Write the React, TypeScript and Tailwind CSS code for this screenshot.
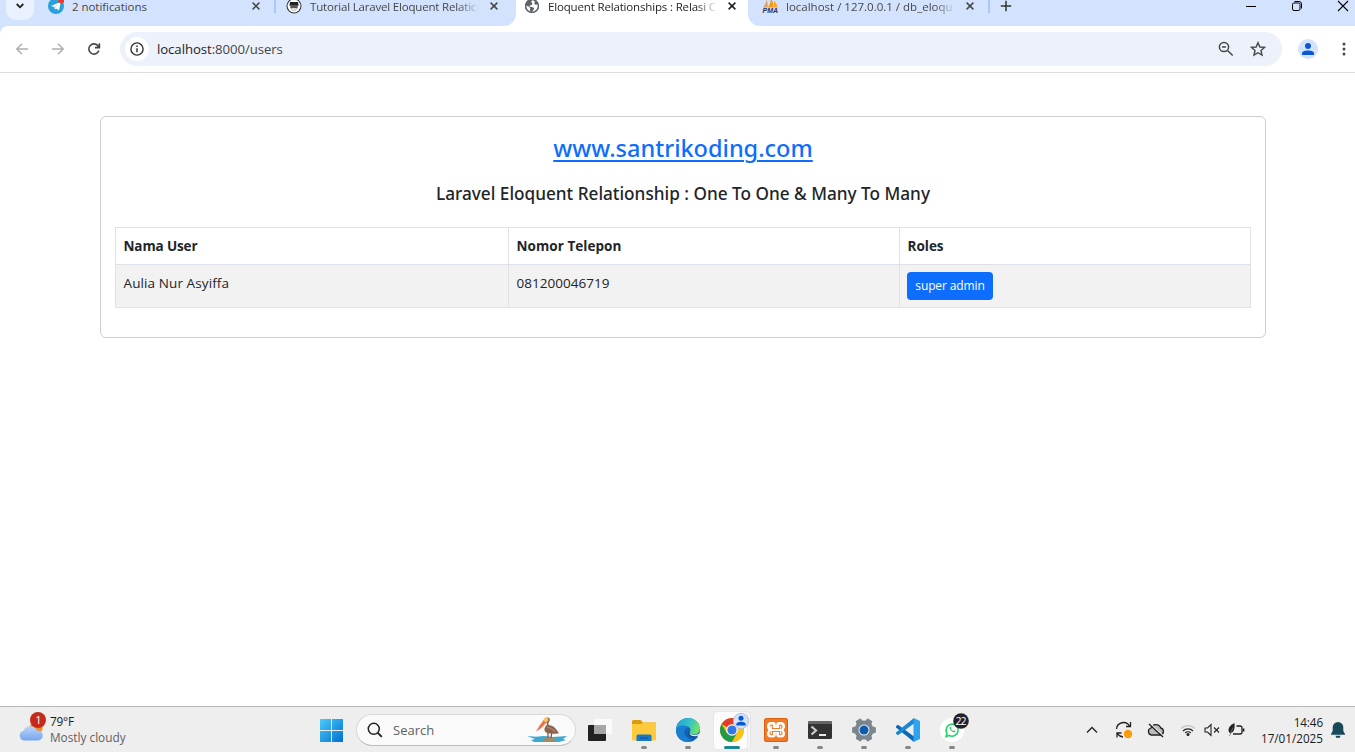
import type { ReactNode } from "react";

type P = { children?: ReactNode };

const S = ({ children }: P) => (
  <svg width={24} height={24} viewBox="0 0 24 24" className="block shrink-0 overflow-visible">
    {children}
  </svg>
);

function Close({ dark }: { dark?: boolean }) {
  return (
    <svg width="8" height="8" viewBox="0 0 8 8" className="block shrink-0">
      <path d="M.6.6l6.8 6.8M7.4.6L.6 7.4" stroke={dark ? "#1f1f1f" : "#474747"} strokeWidth="1.5" />
    </svg>
  );
}

function Telegram() {
  return (
    <svg width="16" height="16" viewBox="0 0 16 16" className="block shrink-0">
      <circle cx="8" cy="8" r="8" fill="#2aa1da" />
      <path d="M3 7.9l8.8-3.6c.5-.2.8.1.7.6l-1.4 6.8c-.1.5-.4.6-.8.3L8.1 10.4l-1.2 1.1-.5-2.5z" fill="#fff" />
      <path d="M6.4 9l4.2-3.2-3.4 3.9-.3 1.8z" fill="#b5d6ea" />
      <circle cx="13.2" cy="2.6" r="3" fill="#f03a2a" />
    </svg>
  );
}

function Santri() {
  return (
    <svg width="16" height="16" viewBox="0 0 16 16" className="block shrink-0">
      <circle cx="8" cy="8" r="7" fill="#fff" stroke="#3c3c3c" strokeWidth="1.1" />
      <path d="M4 4h8l.6 3.800H3.400z" fill="#222" />
      <path d="M4.300 8h7.400v1.400c0 1-1 1.300-1.700.8H6c-.7.5-1.700.2-1.700-.8z" fill="#555" />
      <path d="M5.500 11q2.500 1.600 5 0v1.200q-2.500 1.300-5 0z" fill="#bbb" />
    </svg>
  );
}

function Globe() {
  return (
    <svg width="16" height="16" viewBox="0 0 16 16" className="block shrink-0">
      <circle cx="8" cy="8" r="7" fill="#5f6368" />
      <path d="M9.500 1.500C8 2 7 3 7.500 4.200S9 5.500 8.200 6.500 5.800 6.800 5.500 8 7 9 8.500 9.200s2 1.400 1.300 2.300-1.300 1.300-1.600 2.600c3.500 0 6-2.600 6-6 0-.7-.1-1.400-.4-2-.8.3-1 .9-2 .6s-1.700-1.200-1.300-2 .1-1.400-.2-2.200z" fill="#fff" />
      <path d="M2 7.600l3 1.200 1.200 1.500-.2 2.200.8 1.500C4 13.500 1.700 11 2 7.600z" fill="#fff" />
      <circle cx="8" cy="8" r="6.400" fill="none" stroke="#5f6368" strokeWidth="1.400" />
    </svg>
  );
}

function Pma() {
  return (
    <svg width="17" height="16" viewBox="0 0 17 16" className="block shrink-0">
      <path d="M1 9.500Q4 6 4.800 1.500 6 6 5.500 9.500z" fill="#d9a066" />
      <path d="M5.800 9.500Q9 5 8.800.5q3 4 2.400 9z" fill="#f89c0e" />
      <path d="M11.500 9.500q.8-4 .3-7 3 3 4 7z" fill="#f8a530" />
      <text x="0.500" y="14.800" fontFamily="Liberation Sans, sans-serif" fontWeight="700" fontStyle="italic" fontSize="6.600" fill="#2f2f5c" textLength="15.500" lengthAdjust="spacingAndGlyphs">PMA</text>
    </svg>
  );
}

const tab = "whitespace-nowrap text-[11.5px] font-['Open_Sans',sans-serif]";
const fade = "w-[168px] overflow-hidden whitespace-nowrap leading-[14px] [mask-image:linear-gradient(to_right,#000_148px,transparent_170px)]";

function Tabs() {
  return (
    <div className="flex h-[26px] shrink-0 bg-white">
      <div className="flex w-[516px] shrink-0 rounded-br-[12px] bg-[#d3e3fd]">
        <div className="ml-[6px] flex h-[20px] w-[28px] items-center justify-center rounded-b-[10px] bg-[#e9f1fe] pb-[8px]">
          <svg width="8" height="6" viewBox="0 0 8 6"><path d="M.7 1L4 4.300 7.300 1" fill="none" stroke="#1f1f1f" strokeWidth="1.800" /></svg>
        </div>
        <div className="ml-[14px] flex h-[12px] w-[227px] items-center">
          <Telegram />
          <div className="ml-[8px] w-[180px] leading-[14px]"><span className={tab + " tracking-[-0.05px] text-[#474747]"}>2 notifications</span></div>
          <Close />
        </div>
        <div className="-ml-px h-[13px] w-[2px] bg-[#a8c7fa]" />
        <div className="ml-[10px] flex h-[12px] items-center">
          <Santri />
          <div className={fade + " ml-[8px]"}>
            <span className={tab + " tracking-[-0.18px] text-[#474747]"}>Tutorial Laravel Eloquent Relatic</span>
          </div>
          <div className="ml-[12px]"><Close /></div>
        </div>
      </div>
      <div className="flex h-[12px] w-[232px] shrink-0 items-center pl-[8px]">
        <Globe />
        <div className={fade + " ml-[8px]"}>
          <span className={tab + " tracking-[-0.16px] text-[#1f1f1f]"}>Eloquent Relationships : Relasi C</span>
        </div>
        <div className="ml-[12px]"><Close dark /></div>
      </div>
      <div className="flex flex-1 rounded-bl-[12px] bg-[#d3e3fd]">
        <div className="flex h-[12px] items-center pl-[14px]">
          <Pma />
          <div className={fade + " ml-[7px]"}>
            <span className={tab + " text-[#474747]"}>localhost / 127.0.0.1 / db_eloqu</span>
          </div>
          <div className="ml-[12px]"><Close /></div>
          <div className="mt-px ml-[14px] h-[13px] w-[2px] bg-[#a8c7fa]" />
          <svg width="12" height="12" viewBox="0 0 12 12" className="ml-[10px] block"><path d="M6 .8v10.400M.8 6h10.400" stroke="#333" strokeWidth="1.500" /></svg>
        </div>
        <div className="ml-auto flex h-[12px] items-center pr-[6px]">
          <svg width="10" height="12" viewBox="0 0 10 12" className="block"><path d="M0 6.500h10" stroke="#000" /></svg>
          <svg width="10" height="10" viewBox="0 0 10 10" className="ml-[36px] block"><rect x=".5" y="2" width="7.500" height="7.500" rx="1.500" fill="none" stroke="#000" /><path d="M2.500.5H7q2.500 0 2.500 2.500v4.500" fill="none" stroke="#000" /></svg>
          <svg width="12" height="12" viewBox="0 0 12 12" className="ml-[35px] block"><path d="M1 1l10 10M11 1L1 11" stroke="#000" strokeWidth="1.100" /></svg>
        </div>
      </div>
    </div>
  );
}

function Toolbar() {
  return (
    <div className="shrink-0 bg-[#d3e3fd]">
      <div className="flex h-[47px] items-center rounded-tl-[8px] border-b border-[#dfdfdf] bg-white pl-[16px]">
        <svg width="12" height="12" viewBox="0 0 12 12"><path d="M12 6H1M6 .8L.9 6 6 11.200" fill="none" stroke="#b0b0b0" strokeWidth="1.500" /></svg>
        <svg width="12" height="12" viewBox="0 0 12 12" className="ml-[24px]"><path d="M0 6h11M6 .8L11.100 6 6 11.200" fill="none" stroke="#b0b0b0" strokeWidth="1.500" /></svg>
        <svg width="12" height="12" viewBox="0 0 12 12" className="ml-[24px] overflow-visible"><path d="M10.800 7.400A5.100 5.100 0 1 1 10.200 3.200L11.400 4.500M11.400.2v4.400H7" fill="none" stroke="#444" strokeWidth="1.600" /></svg>
        <div className="ml-[20px] flex h-[34px] w-[1162px] items-center rounded-full bg-[#ecf1fa] pl-[5px]">
          <div className="flex size-[24px] items-center justify-center rounded-full bg-white">
            <svg width="14" height="14" viewBox="0 0 14 14"><circle cx="7" cy="7" r="6.100" fill="none" stroke="#333" strokeWidth="1.400" /><path d="M7 6.200v4M7 3.600v1.500" stroke="#333" strokeWidth="1.500" /></svg>
          </div>
          <div className="ml-[8px] pb-px text-[13.2px] leading-[20px] tracking-[-0.07px] text-[#474747] font-['Open_Sans',sans-serif]">
            <span className="text-[#1f1f1f]">localhost</span>:8000/users
          </div>
          <svg width="16" height="16" viewBox="0 0 16 16" className="ml-auto"><circle cx="6" cy="6" r="4.600" fill="none" stroke="#474747" strokeWidth="1.500" /><path d="M9.500 9.500l5.200 5M4 6h4" stroke="#474747" strokeWidth="1.500" /></svg>
          <svg width="16" height="16" viewBox="0 0 16 16" className="mr-[16px] ml-[16px]"><path d="M8 1.700l1.900 4.300 4.600.4-3.500 3.100 1 4.600L8 11.700l-4 2.400 1-4.600L1.500 6.400l4.600-.4z" fill="none" stroke="#474747" strokeWidth="1.400" /></svg>
        </div>
        <svg width="20" height="20" viewBox="0 0 20 20" className="ml-[16px]"><circle cx="10" cy="10" r="10" fill="#d3e3fd" /><circle cx="10" cy="7" r="3" fill="#0b57d0" /><path d="M4 16v-1.600C4 12.200 7 11.400 10 11.400s6 .8 6 3V16z" fill="#0b57d0" /></svg>
        <svg width="4" height="16" viewBox="0 0 4 16" className="ml-[24px]"><circle cx="2" cy="3" r="1.500" fill="#474747" /><circle cx="2" cy="8" r="1.500" fill="#474747" /><circle cx="2" cy="13" r="1.500" fill="#474747" /></svg>
      </div>
    </div>
  );
}

const th = "h-[37px] border-r border-b border-[#dee2e6] pt-[8px] pl-[7.5px] text-[13.5px] leading-[21px] font-bold ";
const td = "h-[43px] border-r border-b border-[#dee2e6] bg-[#f2f2f2] pt-[8px] pl-[7.5px] text-[13.5px] leading-[21px] ";

function Page() {
  return (
    <main className="flex-1 overflow-hidden pt-[43px] text-[#212529] font-['Open_Sans',sans-serif]">
      <div className="ml-[100px] h-[222px] w-[1166px] rounded-[6px] border border-[#cfcfcf] px-[14px] pt-[15px]">
        <h4 className="h-[34px] text-center text-[23.5px] leading-[33px] font-medium text-[#0d6efd] underline decoration-2 underline-offset-[3px] font-['Noto_Sans',sans-serif]">www.santrikoding.com</h4>
        <h5 className="mt-[16px] h-[24px] text-center text-[17.2px] leading-[24px] font-medium font-['Noto_Sans',sans-serif]">Laravel Eloquent Relationship : One To One &amp; Many To Many</h5>
        <div className="mt-[21px] grid w-[1136px] grid-cols-[393px_391px_1fr] border-t border-l border-[#dee2e6]">
          <div className={th + "tracking-[-0.12px]"}>Nama User</div>
          <div className={th + "tracking-[0.05px]"}>Nomor Telepon</div>
          <div className={th}>Roles</div>
          <div className={td + "tracking-[0.1px]"}>Aulia Nur Asyiffa</div>
          <div className={td + "tracking-[0.03px]"}>081200046719</div>
          <div className="h-[43px] border-r border-b border-[#dee2e6] bg-[#f2f2f2] pt-[7px] pl-[7px]">
            <div className="flex h-[28px] w-[86px] items-center justify-center rounded-[4px] bg-[#0d6efd] text-[12px] tracking-[-0.12px] text-white">super admin</div>
          </div>
        </div>
      </div>
    </main>
  );
}

function TaskItem({ children, on = true }: P & { on?: boolean }) {
  return (
    <div className="flex h-full w-[44px] flex-col items-center pt-[11px]">
      {children}
      {on && <div className="mt-[4px] h-[3px] w-[6px] rounded-full bg-[#868686]" />}
    </div>
  );
}

function Taskbar() {
  return (
    <footer className="flex h-[46px] shrink-0 border-t border-[#b9bbba] bg-[#eeeeee] font-['Open_Sans',sans-serif]">
      <div className="flex w-[309px] pt-[5px] pl-[18px]">
        <svg width="30" height="32" viewBox="0 0 30 32" className="shrink-0">
          <defs><linearGradient id="cl" x1="0" y1="0" x2="0" y2="1"><stop offset="0" stopColor="#bcd6fb" /><stop offset="1" stopColor="#76a5ee" /></linearGradient></defs>
          <circle cx="18" cy="16" r="6.500" fill="#f58a1f" />
          <path d="M6 28.500a5 5 0 0 1-.5-9.800A7.500 7.500 0 0 1 19 18.500a5 5 0 0 1 1.500 10z" fill="url(#cl)" />
          <circle cx="20" cy="8" r="8" fill="#c42b1c" />
          <text x="20.500" y="12" textAnchor="middle" fontFamily="Open Sans, sans-serif" fontSize="11" fill="#fff">1</text>
        </svg>
        <div className="ml-[2px] flex flex-col pt-[1px] text-[11.8px] leading-[16px]">
          <span className="tracking-[-0.2px] text-[#1b1b1b]">79°F</span>
          <span className="text-[#5f5f5f]">Mostly cloudy</span>
        </div>
      </div>
      <TaskItem on={false}>
        <S><defs><linearGradient id="wn" x1="0" y1="0" x2="1" y2="1"><stop offset="0" stopColor="#4cc9fb" /><stop offset="1" stopColor="#0070cf" /></linearGradient></defs><path d="M1 1h11v11H1zM13 1h11v11H13zM1 13h11v11H1zM13 13h11v11H13z" fill="url(#wn)" /></S>
      </TaskItem>
      <div className="mt-[7px] ml-[3px] flex h-[32px] w-[220px] items-center rounded-full border border-[#d9d9d9] border-b-[#bcbcbc] bg-[#fafafa] pr-[7px] pl-[10px]">
        <svg width="16" height="16" viewBox="0 0 16 16"><circle cx="6.800" cy="6.800" r="5.500" fill="none" stroke="#222" strokeWidth="1.500" /><path d="M10.800 10.800l4 4" stroke="#222" strokeWidth="1.900" /></svg>
        <div className="ml-[10px] text-[13px] leading-[20px] text-[#616161]">Search</div>
        <svg width="41" height="26" viewBox="0 0 41 26" className="ml-auto">
          <path d="M0 19l9 .8 8-.8 9 1 14-1-4 3 3 1-7 2H7l-3-2 4-1z" fill="#3da9cf" />
          <path d="M15 25q2-5 7-5t8 5z" fill="#a08a68" />
          <path d="M21 14v7M25 14l-1 7" stroke="#7a5230" strokeWidth="1.200" />
          <path d="M19 .8c3-1 4.500 1 3.500 3.200s-2 3 0 4.200c4 .3 7 4 9.500 8-5 .8-9 .8-12.500-.5-3.500-2.500-2-5.200.2-7.700 1-1.500-1-3-1.700-5z" fill="#8b6450" />
          <path d="M20 10q5 1 8 4.500" fill="none" stroke="#b38a6c" strokeWidth="1.200" />
          <path d="M17 2.500Q12.500 8 9 14.500q6-3 11-10z" fill="#f0714a" />
          <circle cx="19" cy="2.800" r="2.300" fill="#f7c463" />
        </svg>
      </div>
      <div className="ml-[2px] flex">
        <TaskItem on={false}>
          <S><rect y="7" width="18" height="16" rx="1" fill="#222" /><rect x="6" y="1" width="18" height="15" rx="1" fill="#fafafa" /><rect x="6" y="7" width="12" height="9" fill="#a6a6a6" /></S>
        </TaskItem>
        <TaskItem>
          <S><path d="M0 3.500Q0 2 1.500 2h7l2.500 2.500H24V20H0z" fill="#d99b0b" /><path d="M0 6h9l2-1.500h13V22.500H0z" fill="#fdca3c" /><path d="M4.500 23v-5q0-1.500 1.500-1.500h12q1.500 0 1.500 1.500v5z" fill="#1878c8" /><path d="M8 20h8" stroke="#0f5da3" strokeWidth="1.500" /></S>
        </TaskItem>
        <TaskItem>
          <S>
            <defs><linearGradient id="e1" x1="0" y1="0" x2="1" y2=".3"><stop offset="0" stopColor="#1c9fdc" /><stop offset=".6" stopColor="#35c1c8" /><stop offset="1" stopColor="#6be26b" /></linearGradient></defs>
            <circle cx="12" cy="12" r="12" fill="#1263b3" />
            <path d="M0 12C0 5 5 0 12 0s12 5 12 10.500c0 4-3 6-6.500 6-3 0-4-1.500-3.500-2.500 1.500-2.500-.5-6-5-6C4 8 .5 10.500 0 12z" fill="url(#e1)" />
            <path d="M0 12C1 9 4 7 8 7.500c2.500.3 4 1.500 4 2.500-3 0-4.500 3-3.500 6s4 5.500 7.500 5.500c-7 5.500-16 0-16-9.500z" fill="#1b7fd0" />
            <path d="M13.500 14.500c0 2 5 3.500 9 1.500l1.500-.5v3l-1 1.500-1.500-1.500c-3 1.500-8 0-8-4z" fill="#eee" />
            <path d="M12.800 13.500c-.5 4 5.200 5.800 9.700 4-1.500 1.800-4.500 2.800-7 2.300s-4.500-3.800-2.700-6.300z" fill="#0f4f9a" />
          </S>
        </TaskItem>
        <div className="relative flex h-full w-[44px] flex-col items-center pt-[11px]">
          <div className="absolute top-[4px] left-[3px] h-[39px] w-[38px] rounded-[4px] border border-[#e4e4e4] bg-[#f6f6f6]" />
          <div className="absolute top-[4px] left-[3px] h-[39px] w-[35px] rounded-[4px] border border-[#e8e8e8] bg-[#fcfcfc]" />
          <div className="relative">
            <S><circle cx="12" cy="12" r="12" fill="#fbc116" /><path d="M12 12L1.600 6a12 12 0 0 1 20.800 0z" fill="#e33b2e" /><path d="M1.600 6A12 12 0 0 0 12 24l5.200-9L12 12 6.800 15z" fill="#229a48" /><path d="M22.400 6H12v6l5.200 3L12 24A12 12 0 0 0 22.400 6z" fill="#fbc116" /><circle cx="12" cy="12" r="5.800" fill="#fff" /><circle cx="12" cy="12" r="4.600" fill="#3377e8" /><circle cx="21" cy="3" r="7.700" fill="#d3e3fd" stroke="#aab6c9" strokeWidth=".8" /><circle cx="21" cy=".3" r="2.500" fill="#0b57d0" /><path d="M16.300 7.500V6.500q0-2.700 4.700-2.700t4.700 2.700v1z" fill="#0b57d0" /></S>
          </div>
          <div className="relative mt-[4px] h-[3px] w-[16px] rounded-full bg-[#1f8494]" />
        </div>
        <TaskItem>
          <S>
            <rect width="24" height="24" rx="2.500" fill="#d9620f" /><rect x="1" y="1" width="22" height="22" rx="2" fill="#f07a26" />
            <path d="M7.500 4h1.800Q11.800 4 11.800 7v1.500h.4V7Q12.200 4 14.700 4h1.800Q21 4 21 8.200 21 10.500 19.500 12 21 13.500 21 15.500 21 19.500 17 19.500h-1.800q-3 0-3-3V15h-.4v1.500q0 3-3 3H7q-4 0-4-4Q3 13.500 4.500 12 3 10.500 3 8.200 3 4 7.500 4z" fill="#fff" />
            <path d="M6 8.500q0-1.500 1.500-1.500h.8v3.500H15.700V7h.8Q18 7 18 8.500q0 1.300-1 2M7 13.500q-1 .6-1 2 0 1.200 1.200 1.200h1.200V13.500H15.600v3.200h1.200q1.200 0 1.200-1.200 0-1.400-1-2" fill="none" stroke="#f07a26" strokeWidth="1.100" />
          </S>
        </TaskItem>
        <TaskItem>
          <S><rect y="3" width="24" height="18" rx="1.500" fill="#333" /><path d="M0 6V4.500Q0 3 1.500 3h21Q24 3 24 4.500V6z" fill="#666" /><path d="M3.500 8.500l4.500 4-4.500 4" fill="none" stroke="#ccc" strokeWidth="2.200" /><path d="M11 17h7" stroke="#fff" strokeWidth="1.800" /></S>
        </TaskItem>
        <TaskItem>
          <S>
            <g fill="#7c858d">
              <circle cx="12" cy="12" r="9.500" />
              {[0, 60, 120, 180, 240, 300].map((a) => (
                <path key={a} d="M20.500 9l2.800.6v4.800l-2.800.6z" stroke="#7c858d" strokeLinejoin="round" transform={`rotate(${a} 12 12)`} />
              ))}
            </g>
            <circle cx="12" cy="12" r="5.500" fill="#eee" /><circle cx="12" cy="12" r="4.500" fill="#0c5cb0" />
          </S>
        </TaskItem>
        <TaskItem>
          <S><path d="M0 8.300l2-1.600L18 18.500V24L0 9.500z" fill="#0a69b5" /><path d="M0 15.700l2 1.600L18 5.500V0L0 14.500z" fill="#1b86d1" /><path d="M17.500 0L24 3v18l-6.500 3z" fill="#2ba3ee" /></S>
        </TaskItem>
        <TaskItem>
          <S><circle cx="12" cy="12" r="12" fill="#fff" /><path d="M6 18.500l1-3.200a6 6 0 1 1 2.200 2.100z" fill="none" stroke="#25d366" strokeWidth="1.600" /><path d="M9.800 9q-1 1.500 1.300 3.800t4 1.200l.3-1-1.600-.8-.8.7q-1.400-.6-2-2l.6-.7-.7-1.500z" fill="#25d366" /><circle cx="21" cy="3" r="7.800" fill="#22222c" /><text x="21" y="6.800" textAnchor="middle" fontFamily="Open Sans, sans-serif" fontSize="10.500" fill="#fff" textLength="11">22</text></S>
        </TaskItem>
      </div>
      <div className="ml-auto flex h-full items-center pr-[10px]">
        <svg width="12" height="8" viewBox="0 0 12 8"><path d="M1 6.500l5-5 5 5" fill="none" stroke="#222" strokeWidth="1.300" /></svg>
        <svg width="18" height="18" viewBox="0 0 18 18" className="ml-[17px]"><path d="M1.500 8A7 7 0 0 1 14.500 5M15.500 1v4.500H11M2 16.500V12h4.500M2.500 12.500A7 7 0 0 0 8 16" fill="none" stroke="#222" strokeWidth="1.300" /><circle cx="13" cy="13" r="4.200" fill="#fb9a0b" /></svg>
        <svg width="18" height="16" viewBox="0 0 18 16" className="ml-[14px]"><path d="M4.500 13a3.600 3.600 0 0 1-.5-7A5.200 5.200 0 0 1 13.800 6a3.600 3.600 0 0 1-.3 7z" fill="#bbb" stroke="#222" strokeWidth="1.300" /><path d="M3 1.500l14 13" stroke="#eee" strokeWidth="1.500" /><path d="M2 2l14 13" stroke="#222" strokeWidth="1.400" /></svg>
        <svg width="16" height="12" viewBox="0 0 16 12" className="ml-[15px]"><path d="M1 4.500a10 10 0 0 1 14 0" fill="none" stroke="#c4c4c4" strokeWidth="1.100" /><path d="M3 7a7 7 0 0 1 10 0M5.200 9a4 4 0 0 1 5.600 0" fill="none" stroke="#222" strokeWidth="1.200" /><circle cx="8" cy="10.500" r="1.500" fill="#222" /></svg>
        <svg width="16" height="14" viewBox="0 0 16 14" className="ml-[8px]"><path d="M1 5h2.500L7 1.500v11L3.500 9H1z" fill="none" stroke="#222" strokeWidth="1.100" /><path d="M10 4.500l5 5M15 4.500l-5 5" stroke="#222" strokeWidth="1.100" /></svg>
        <svg width="17" height="14" viewBox="0 0 17 14" className="ml-[8px]"><path d="M8.500 3H12q2 0 2 2v4q0 2-2 2H5" fill="none" stroke="#222" strokeWidth="1.300" /><path d="M15.500 5.500v3" stroke="#222" strokeWidth="1.800" /><path d="M6.500 0Q.5 3 .5 7q0 3 2 3.500Q7.500 9 6.500 0z" fill="#222" /><path d="M5 4.500L1.500 13" stroke="#777" strokeWidth=".8" /></svg>
        <div className="ml-[15px] flex w-[63px] flex-col items-end text-[11.7px] leading-[16px] text-[#1b1b1b]">
          <span className="tracking-[-0.1px]">14:46</span>
          <span>17/01/2025</span>
        </div>
        <svg width="14" height="16" viewBox="0 0 14 16" className="ml-[8px]"><path d="M7 0a5.300 5.300 0 0 1 5.300 5.300V9L14 12v.8H0V12l1.700-3V5.300A5.300 5.300 0 0 1 7 0zM4.500 13.700h5a2.500 2.200 0 0 1-5 0z" fill="#17495a" /></svg>
      </div>
    </footer>
  );
}

export default function App() {
  return (
    <div className="flex h-[752px] w-[1355px] flex-col overflow-hidden bg-white">
      <Tabs />
      <Toolbar />
      <Page />
      <Taskbar />
    </div>
  );
}
